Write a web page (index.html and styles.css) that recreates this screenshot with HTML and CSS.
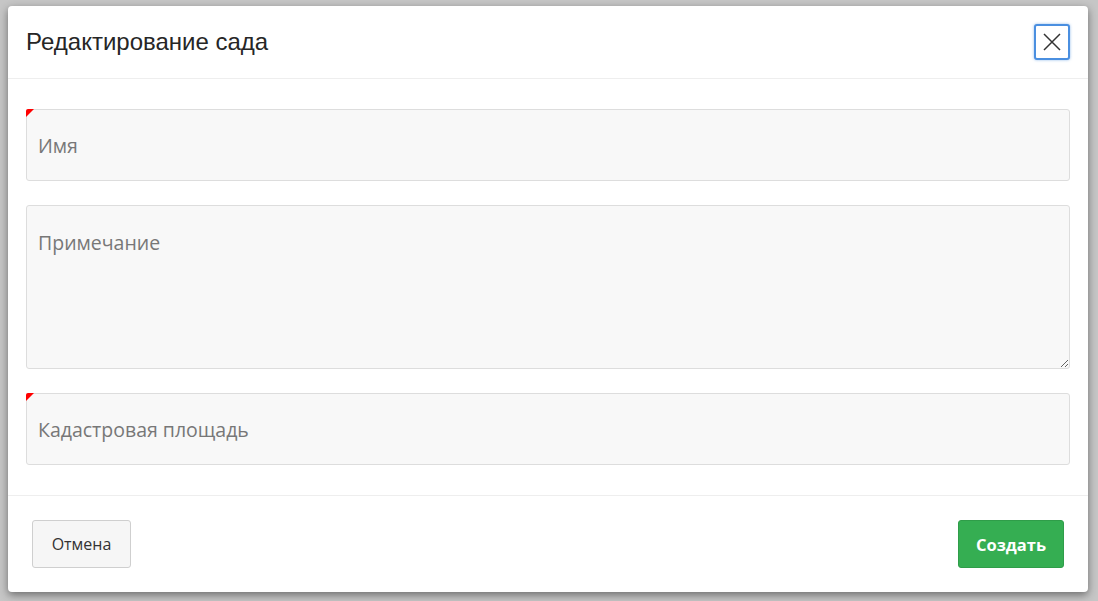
FILE: index.html
```html
<!DOCTYPE html>
<html lang="ru">
<head>
<meta charset="utf-8">
<title>Редактирование сада</title>
<link rel="stylesheet" href="styles.css">
</head>
<body>
<div class="modal">
  <div class="modal-header">
    <h1 class="modal-title">Редактирование сада</h1>
    <button class="close-btn" type="button" aria-label="Закрыть">
      <svg width="18" height="18" viewBox="0 0 18 18"><path d="M1 1L17 17M17 1L1 17" stroke="#333" stroke-width="1.5" fill="none"/></svg>
    </button>
  </div>
  <div class="modal-body">
    <div class="field required">
      <input class="control" type="text" placeholder="Имя">
    </div>
    <div class="field">
      <textarea class="control area" placeholder="Примечание"></textarea>
    </div>
    <div class="field required">
      <input class="control" type="text" placeholder="Кадастровая площадь">
    </div>
  </div>
  <div class="modal-footer">
    <button class="btn btn-cancel" type="button">Отмена</button>
    <button class="btn btn-create" type="button">Создать</button>
  </div>
</div>
</body>
</html>
```
FILE: styles.css
```css
html, body {
  margin: 0;
  height: 100%;
}
body {
  background: #c6c6c6;
  padding: 6px 0 0 8px;
  box-sizing: border-box;
  overflow: hidden;
  font-family: "Open Sans", "Liberation Sans", sans-serif;
}
.modal {
  width: 1080px;
  height: 586px;
  background: #fff;
  border-radius: 4px;
  box-shadow: 0 3px 9px rgba(0,0,0,0.45);
  display: flex;
  flex-direction: column;
  box-sizing: border-box;
}
.modal-header {
  height: 73px;
  box-sizing: border-box;
  border-bottom: 1px solid #eeeeee;
  display: flex;
  align-items: center;
  justify-content: space-between;
  padding: 0 18px;
}
.modal-title {
  margin: 0;
  font-family: "Liberation Sans", Arial, sans-serif;
  font-weight: normal;
  font-size: 24px;
  color: #262626;
  padding-top: 0;
}
.close-btn {
  width: 36px;
  height: 36px;
  align-self: flex-start;
  margin-top: 18px;
  border: 2px solid #4a8fe0;
  border-radius: 3px;
  background: #fff;
  box-shadow: 0 0 3px rgba(74,143,224,0.6);
  display: flex;
  align-items: center;
  justify-content: center;
  padding: 0;
}
.modal-body {
  padding: 30px 18px;
  display: flex;
  flex-direction: column;
  gap: 24px;
  border-bottom: 1px solid #eeeeee;
}
.field {
  position: relative;
}
.field.required::before {
  content: "";
  position: absolute;
  left: 0;
  top: 0;
  width: 0;
  height: 0;
  border-top: 8px solid #ff0000;
  border-right: 8px solid transparent;
  border-top-left-radius: 2px;
}
.control {
  display: block;
  width: 100%;
  height: 72px;
  box-sizing: border-box;
  background: #f8f8f8;
  border: 1px solid #dddddd;
  border-radius: 3px;
  padding: 0 11px;
  font-family: "Open Sans", sans-serif;
  font-size: 19.5px;
  color: #333;
  outline: none;
  margin: 0;
}
.control::placeholder {
  color: #777777;
}
.area {
  height: 164px;
  padding-top: 24px;
  resize: vertical;
  line-height: 26px;
}
.modal-footer {
  flex: 1;
  display: flex;
  align-items: flex-start;
  justify-content: space-between;
  padding: 24px 24px 0 24px;
}
.btn {
  height: 48px;
  border-radius: 3px;
  font-family: "Open Sans", sans-serif;
  font-size: 16px;
  padding: 0;
  cursor: pointer;
}
.btn-cancel {
  width: 99px;
  background: #f6f6f6;
  border: 1px solid #cfcfcf;
  color: #333;
}
.btn-create {
  width: 106px;
  background: #35ae52;
  border: 1px solid #2f9d49;
  color: #fff;
  font-weight: bold;
  font-size: 16.5px;
}
```
